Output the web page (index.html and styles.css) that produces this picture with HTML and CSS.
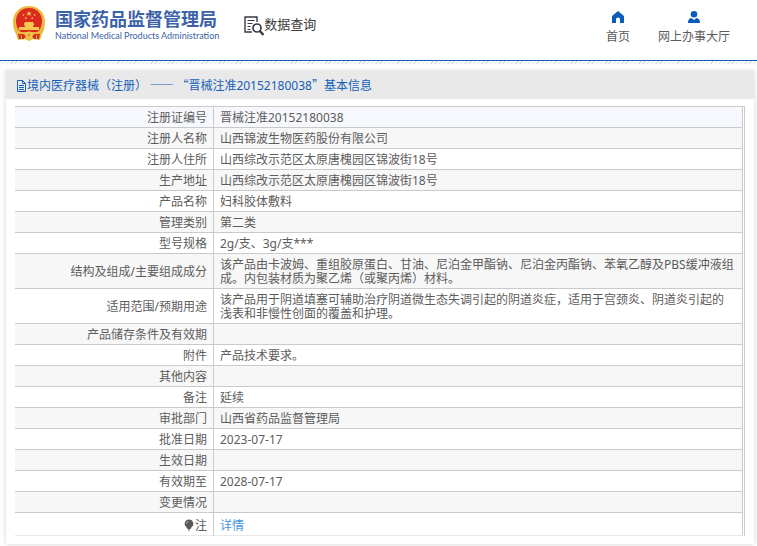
FILE: index.html
```html
<!DOCTYPE html>
<html lang="zh-CN">
<head>
<meta charset="utf-8">
<title>国家药品监督管理局 数据查询</title>
<link rel="stylesheet" href="styles.css">
</head>
<body>
<header class="top">
  <svg class="emblem" viewBox="0 0 34 36" aria-hidden="true">
    <path fill="#edb83f" d="M17 0C7 0 1 7 1 16c0 5 1 9 3 12l2 6 7-1 4 2 4-2 7 1 2-6c2-3 3-7 3-12C33 7 27 0 17 0z"/>
    <path fill="#dc2a1c" d="M17 2C9 2 4 8 4 15c0 5 2 9 5 11h16c3-2 5-6 5-11C30 8 25 2 17 2z"/>
    <path fill="#f5c94f" d="M17 5l.8 1.800h2l-1.600 1.200.6 2-1.800-1.200-1.800 1.200.6-2-1.600-1.200h2zM11 8l1.500.5-.8 1.400-1.200-.6zM23 8l-1.500.5.8 1.400 1.200-.6zM13 11.500h1.500v1.500H13zM19.500 11.500H21v1.500h-1.500zM13 16h8l1 2v1.500h-1V21h6v3H7v-3h6v-1.500h-1V18z"/>
    <path fill="#d42a1c" d="M6 28l5 0 3 2-2 3-5 0zM28 28l-5 0-3 2 2 3 5 0z"/>
    <circle cx="17" cy="29" r="3.500" fill="#f5c94f"/>
    <circle cx="17" cy="29" r="1.500" fill="#e58a2c"/>
    <path stroke="#f0bd4c" stroke-width="1" fill="none" d="M9 29l1 5M25 29l-1 5M14 33h6"/>
  </svg>
  <div class="brand">
    <div class="brand-cn">国家药品监督管理局</div>
    <div class="brand-en">National Medical Products Administration</div>
  </div>
  <div class="query">
    <svg class="query-icon" viewBox="0 0 20 20" fill="none" stroke="#36394a" aria-hidden="true">
      <path stroke-width="1.400" d="M13 6V1H1v15h7"/>
      <path stroke-width="1.200" d="M3.500 4.500h7M3.500 7.500h5M3.500 10.500h3M3.500 13.500h3"/>
      <circle cx="13" cy="12" r="4" stroke-width="1.700"/>
      <path stroke-width="2.400" d="M15.800 15l3.700 4"/>
    </svg>
    <span>数据查询</span>
  </div>
  <nav class="links">
    <a href="#">
      <svg viewBox="0 0 14 12" aria-hidden="true"><path fill="#0b5cb8" d="M7 0l6 5v7H9V8.500a2 2 0 0 0-4 0V12H1V5z"/></svg>
      首页
    </a>
    <a href="#">
      <svg viewBox="0 0 14 12" aria-hidden="true"><circle cx="7" cy="3.300" r="3.300" fill="#0b5cb8"/><path fill="#0b5cb8" d="M1 12c0-3 1-4.500 3.500-5L7 9l2.500-2C12 7.500 13 9 13 12z"/></svg>
      网上办事大厅
    </a>
  </nav>
</header>
<main class="panel">
  <h1 class="title">
    <svg viewBox="0 0 11 12" fill="none" stroke="#1560ba" aria-hidden="true"><path d="M1.500.5h5l3 3v8h-8zM6.500.5v3h3M3 5.500h5M3 7.500h5M3 9.500h5"/></svg>
    <span>境内医疗器械（注册） —— “晋械注准<span class="num">20152180038</span>”基本信息</span>
  </h1>
  <div class="frame">
    <table class="info">
      <tbody>
        <tr class="lead"><th scope="row">注册证编号</th><td>晋械注准20152180038</td></tr>
        <tr><th scope="row">注册人名称</th><td>山西锦波生物医药股份有限公司</td></tr>
        <tr><th scope="row">注册人住所</th><td>山西综改示范区太原唐槐园区锦波街18号</td></tr>
        <tr><th scope="row">生产地址</th><td>山西综改示范区太原唐槐园区锦波街18号</td></tr>
        <tr><th scope="row">产品名称</th><td>妇科胶体敷料</td></tr>
        <tr><th scope="row">管理类别</th><td>第二类</td></tr>
        <tr><th scope="row">型号规格</th><td>2g/支、3g/支***</td></tr>
        <tr><th scope="row">结构及组成/主要组成成分</th><td>该产品由卡波姆、重组胶原蛋白、甘油、尼泊金甲酯钠、尼泊金丙酯钠、苯氧乙醇及PBS缓冲液组成。内包装材质为聚乙烯（或聚丙烯）材料。</td></tr>
        <tr><th scope="row">适用范围/预期用途</th><td>该产品用于阴道填塞可辅助治疗阴道微生态失调引起的阴道炎症，适用于宫颈炎、阴道炎引起的浅表和非慢性创面的覆盖和护理。</td></tr>
        <tr><th scope="row">产品储存条件及有效期</th><td></td></tr>
        <tr><th scope="row">附件</th><td>产品技术要求。</td></tr>
        <tr><th scope="row">其他内容</th><td></td></tr>
        <tr><th scope="row">备注</th><td>延续</td></tr>
        <tr><th scope="row">审批部门</th><td>山西省药品监督管理局</td></tr>
        <tr><th scope="row">批准日期</th><td>2023-07-17</td></tr>
        <tr><th scope="row">生效日期</th><td></td></tr>
        <tr><th scope="row">有效期至</th><td>2028-07-17</td></tr>
        <tr><th scope="row">变更情况</th><td></td></tr>
        <tr class="note"><th scope="row"><svg class="bulb" viewBox="0 0 10 12" aria-hidden="true"><path fill="#55575a" d="M5 .5a4.300 4.300 0 0 0-2.500 7.800L3.500 10h3l1-1.700A4.300 4.300 0 0 0 5 .5zM4 10.500h2v1H4z"/><path fill="none" stroke="#ccc" d="M2.500 4.500A2.500 2.500 0 0 1 4.500 2.500"/></svg>注</th><td><a href="#">详情</a></td></tr>
      </tbody>
    </table>
  </div>
</main>
</body>
</html>
```
FILE: styles.css
```css
* { box-sizing: border-box; }

body {
  margin: 0;
  background: #fdfdfd;
  color: #5c5c5c;
  font: 12px/14px "Noto Sans", "Noto Sans CJK SC", sans-serif;
}

a { color: inherit; text-decoration: none; }

.top {
  position: relative;
  display: flex;
  align-items: flex-start;
  height: 61px;
  padding: 6px 27px 0 12px;
  background: #fff;
  border-bottom: 1px solid #1c5ca8;
}

.top::after {
  content: "";
  position: absolute;
  left: 0;
  right: 0;
  top: 61px;
  height: 3px;
  background: repeating-linear-gradient(135deg, #d3e2f1 0 1px, #fff 1px 3px);
}

.emblem { width: 34px; height: 36px; }

.brand { margin-left: 9px; color: #3c62a9; white-space: nowrap; }

.brand-cn {
  font: bold 18px/20px "Noto Sans CJK SC", sans-serif;
  margin-top: 2px;
}

.brand-en {
  font: 9px/12px Lato, sans-serif;
  margin-top: 2px;
}

.query {
  display: flex;
  align-items: center;
  margin: 6px 0 0 25px;
  color: #3a3a3a;
  font-size: 13px;
  line-height: 20px;
  white-space: nowrap;
}

.query-icon { width: 20px; height: 20px; margin-top: 4px; }

.links {
  display: flex;
  gap: 28px;
  margin: 5px 0 0 auto;
  line-height: 20px;
  white-space: nowrap;
}

.links a {
  display: flex;
  flex-direction: column;
  align-items: center;
  gap: 4px;
}

.links svg { width: 14px; height: 12px; }

.panel {
  margin: 10px 3px 2px 6px;
  background: #fff;
  box-shadow: 0 0 4px #d4d4d4;
}

.title {
  display: flex;
  align-items: center;
  margin: 0;
  height: 28px;
  padding: 1px 10px 0;
  background: #e9e9e9;
  color: #1560ba;
  font: 12px/16px "Noto Sans CJK SC", sans-serif;
}

.title svg { width: 11px; height: 12px; }
.num { font-family: "Noto Sans", sans-serif; }

.frame { padding: 7px 9px 8px; }

.info {
  width: 100%;
  border-collapse: separate;
  border-spacing: 0;
  border-top: 1px solid #c9cacc;
  border-right: 1px solid #c9cacc;
  padding-right: 1px;
}

.info th,
.info td {
  height: 21px;
  padding: 4px 7px 2px 6px;
  border-bottom: 1px solid #c9cacc;
  border-right: 1px solid #c9cacc;
  font-weight: normal;
  vertical-align: middle;
}

.info th { width: 199px; padding-right: 6px; text-align: right; }
.info tr:nth-child(even) { background: #f7f7f7; }
.info .lead { background: #f7f8fd; }

.info .note th,
.info .note td { height: 23px; padding-top: 5px; border-bottom-color: #e8e8e8; }

.note a { color: #4396e0; }
.bulb { width: 10px; height: 12px; vertical-align: -1px; margin-right: 1px; }
```
